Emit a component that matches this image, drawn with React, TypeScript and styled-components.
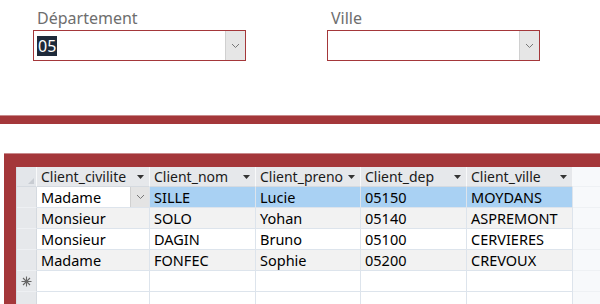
import React from "react";
import styled, { createGlobalStyle } from "styled-components";

const GlobalStyle = createGlobalStyle`
  html, body {
    margin: 0;
    padding: 0;
    background: #ffffff;
  }
  body {
    font-family: "Noto Sans", "Open Sans", sans-serif;
    width: 600px;
    height: 304px;
    overflow: hidden;
  }
`;

const ACCESS_RED = "#a4373a";

const Page = styled.div`
  width: 600px;
  height: 304px;
  display: flex;
  flex-direction: column;
  overflow: hidden;
`;

const FilterBar = styled.div`
  height: 115px;
  flex-shrink: 0;
  display: flex;
  gap: 81px;
  padding-left: 33px;
  box-sizing: border-box;
`;

const Field = styled.div`
  display: flex;
  flex-direction: column;
  padding-top: 6px;
`;

const Label = styled.label`
  font-size: 16px;
  line-height: 24px;
  color: #6e6e6e;
  padding-left: 4px;
`;

const Combo = styled.div`
  width: 213px;
  height: 31px;
  box-sizing: border-box;
  border: 1px solid ${ACCESS_RED};
  display: flex;
  align-items: stretch;
  background: #fff;
`;

const ComboValue = styled.div`
  flex: 1;
  display: flex;
  align-items: center;
  padding-left: 3px;
`;

const Selected = styled.span`
  background: #1e2a3a;
  color: #fff;
  font-size: 16px;
  line-height: 20px;
  padding: 0 1px;
`;

const ComboButton = styled.div`
  width: 19px;
  background: #e6e6e6;
  border-left: 1px solid #d0d0d0;
  display: flex;
  align-items: center;
  justify-content: center;
`;

const Band = styled.div`
  height: 9px;
  flex-shrink: 0;
  background: ${ACCESS_RED};
  border-top: 1px solid #c98a8c;
  box-sizing: border-box;
`;

const Gap = styled.div`
  height: 29px;
  flex-shrink: 0;
`;

const Frame = styled.div`
  flex: 1;
  min-height: 0;
  margin-left: 4px;
  background: ${ACCESS_RED};
  padding: 13px 0 0 12px;
  display: flex;
  border-top: 1px solid #c98a8c;
  overflow: hidden;
`;

const Sheet = styled.div`
  flex: 1;
  background: #fbfcfd;
  border-left: 1px solid #d8dde3;
  overflow: hidden;
`;

const Row = styled.div`
  display: grid;
  grid-template-columns: 20px 113px 106px 105px 106px 106px 1fr;
  height: 21px;
`;

const HeaderRow = styled(Row)`
  height: 20px;
`;

const HeadCell = styled.div<{ $corner?: boolean }>`
  background: ${(p) => (p.$corner ? "#e3e6ea" : "#e6e8eb")};
  border-right: 1px solid #f8f9fa;
  border-bottom: 1px solid #d5dae0;
  display: flex;
  align-items: center;
  justify-content: space-between;
  gap: 4px;
  padding: 0 5px 0 4px;
  font-size: 14px;
  color: #1a1a1a;
  white-space: nowrap;
  position: relative;
`;

const Filler = styled.div`
  background: #f7f9fb;
  border-bottom: 1px solid #eef1f4;
`;

const Cell = styled.div<{ $bg: string }>`
  background: ${(p) => p.$bg};
  border-right: 1px solid #dde4ec;
  border-bottom: 1px solid #dde4ec;
  display: flex;
  align-items: center;
  justify-content: space-between;
  padding-left: 4px;
  font-size: 14.5px;
  color: #000;
  white-space: nowrap;
  overflow: hidden;
`;

const Selector = styled.div`
  background: #e6e8eb;
  border-right: 1px solid #d5dae0;
  border-bottom: 1px solid #eef0f3;
  display: flex;
  align-items: center;
  justify-content: center;
`;

const CellButton = styled.div`
  width: 18px;
  align-self: stretch;
  background: #e4e4e4;
  border-left: 1px solid #d0d0d0;
  display: flex;
  align-items: center;
  justify-content: center;
`;

const Chevron = () => (
  <svg width="9" height="6" viewBox="0 0 9 6">
    <path d="M1 1 L4.5 4.5 L8 1" fill="none" stroke="#777" strokeWidth="1" />
  </svg>
);

const SortArrow = () => (
  <svg width="7" height="4" viewBox="0 0 7 4" style={{ flexShrink: 0 }}>
    <path d="M0 0 H7 L3.5 4 Z" fill="#333" />
  </svg>
);

const Corner = () => (
  <svg width="6" height="6" viewBox="0 0 6 6" style={{ position: "absolute", right: 2, bottom: 2 }}>
    <path d="M6 0 V6 H0 Z" fill="#c8ccd2" />
  </svg>
);

const NewRecord = () => (
  <svg width="11" height="11" viewBox="0 0 11 11">
    <path
      d="M5.5 0.5 V10.5 M0.5 5.5 H10.5 M2 2 L9 9 M9 2 L2 9"
      fill="none"
      stroke="#666"
      strokeWidth="1.1"
    />
  </svg>
);

const columns = ["Client_civilite", "Client_nom", "Client_preno", "Client_dep", "Client_ville"];

const clients = [
  ["Madame", "SILLE", "Lucie", "05150", "MOYDANS"],
  ["Monsieur", "SOLO", "Yohan", "05140", "ASPREMONT"],
  ["Monsieur", "DAGIN", "Bruno", "05100", "CERVIERES"],
  ["Madame", "FONFEC", "Sophie", "05200", "CREVOUX"],
];

const rowBg = (i: number) => (i % 2 === 1 ? "#f2f2f2" : "#ffffff");

const App: React.FC = () => {
  return (
    <Page>
      <GlobalStyle />
      <FilterBar>
        <Field>
          <Label>Département</Label>
          <Combo>
            <ComboValue>
              <Selected>05</Selected>
            </ComboValue>
            <ComboButton>
              <Chevron />
            </ComboButton>
          </Combo>
        </Field>
        <Field>
          <Label>Ville</Label>
          <Combo>
            <ComboValue />
            <ComboButton>
              <Chevron />
            </ComboButton>
          </Combo>
        </Field>
      </FilterBar>
      <Band />
      <Gap />
      <Frame>
        <Sheet>
          <HeaderRow>
            <HeadCell $corner>
              <Corner />
            </HeadCell>
            {columns.map((c) => (
              <HeadCell key={c}>
                {c}
                <SortArrow />
              </HeadCell>
            ))}
            <Filler />
          </HeaderRow>
          {clients.map((row, i) => (
            <Row key={row[1]}>
              <Selector />
              {row.map((v, j) => {
                if (i === 0 && j === 0) {
                  return (
                    <Cell key={j} $bg="#ffffff">
                      {v}
                      <CellButton>
                        <Chevron />
                      </CellButton>
                    </Cell>
                  );
                }
                return (
                  <Cell key={j} $bg={i === 0 ? "#a9d1f3" : rowBg(i)}>
                    {v}
                  </Cell>
                );
              })}
              <Filler />
            </Row>
          ))}
          <Row>
            <Selector>
              <NewRecord />
            </Selector>
            {columns.map((c) => (
              <Cell key={c} $bg="#ffffff" />
            ))}
            <Filler />
          </Row>
          <Row>
            <Selector />
            {columns.map((c) => (
              <Cell key={c} $bg="#ffffff" />
            ))}
            <Filler />
          </Row>
        </Sheet>
      </Frame>
    </Page>
  );
};

export default App;
